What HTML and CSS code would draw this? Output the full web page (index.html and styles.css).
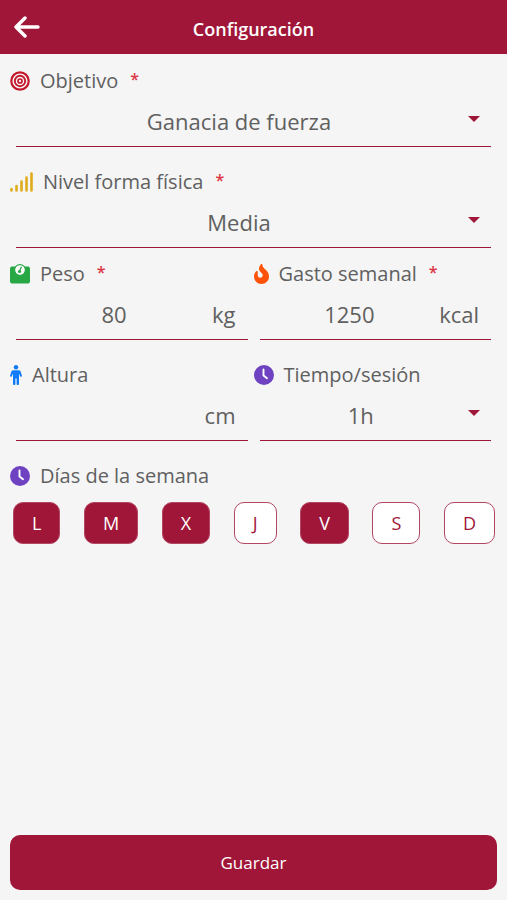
FILE: index.html
```html
<!DOCTYPE html>
<html lang="es">
<head>
<meta charset="utf-8">
<meta name="viewport" content="width=device-width, initial-scale=1">
<title>Configuración</title>
<link rel="stylesheet" href="styles.css">
</head>
<body>
<header class="topbar">
  <button class="back" type="button" aria-label="Volver">
    <svg width="26" height="22" viewBox="0 0 26 22" fill="none" stroke="#fff" stroke-width="3.4" stroke-linecap="round" stroke-linejoin="round"><path d="M11 2 2 11l9 9M2.500 11H24"/></svg>
  </button>
  <h1>Configuración</h1>
</header>
<form class="form">
  <div class="field wide">
    <label class="caption" for="goal">
      <svg width="20" height="20" viewBox="0 0 20 20" fill="none" stroke="#c4182c"><circle cx="10" cy="10" r="8.700" stroke-width="2.200"/><circle cx="10" cy="10" r="5.200" stroke-width="1.900"/><circle cx="10" cy="10" r="2" stroke-width="1.700"/></svg>
      Objetivo <span class="required">*</span>
    </label>
    <div class="control">
      <select id="goal" required><option>Ganacia de fuerza</option></select>
      <svg class="arrow" width="12" height="6" viewBox="0 0 12 6" fill="#a01638"><path d="M0 0h12L6 6z"/></svg>
    </div>
  </div>
  <div class="field wide short">
    <label class="caption" for="level">
      <svg width="23" height="20" viewBox="0 0 23 20" fill="none" stroke="#e0ac1c" stroke-width="2.600" stroke-linecap="round"><path d="M1.500 17v1.500M6.500 14v4.500M11.500 9.500v9M16.500 5.500v13M21.500 1.500v17"/></svg>
      Nivel forma física <span class="required">*</span>
    </label>
    <div class="control">
      <select id="level" required><option>Media</option></select>
      <svg class="arrow" width="12" height="6" viewBox="0 0 12 6" fill="#a01638"><path d="M0 0h12L6 6z"/></svg>
    </div>
  </div>
  <div class="field">
    <label class="caption" for="weight">
      <svg width="20" height="20" viewBox="0 0 20 20"><rect y="2.500" width="20" height="17" rx="2" fill="#28a745"/><circle cx="10" cy="6" r="5.400" fill="#fff" stroke="#28a745" stroke-width="1.200"/><circle cx="9.500" cy="7.500" r="1.600" fill="#28a745"/><path d="m9.700 7 1.500-3.800" stroke="#28a745" stroke-width="1.300" stroke-linecap="round"/></svg>
      Peso <span class="required">*</span>
    </label>
    <div class="control">
      <input id="weight" type="text" inputmode="numeric" value="80" required><span class="unit">kg</span>
    </div>
  </div>
  <div class="field">
    <label class="caption" for="burn">
      <svg width="15" height="20" viewBox="0 0 384 512" fill="#fd5208"><path d="M216 23.860c0-23.800-30.650-32.770-44.150-13.040C48 191.850 224 200 224 288c0 35.630-29.110 64.460-64.850 63.990-35.170-.45-63.150-29.770-63.150-64.940v-85.510c0-21.700-26.470-32.230-41.430-16.500C27.800 213.160 0 261.330 0 320c0 105.870 86.130 192 192 192s192-86.130 192-192c0-170.290-168-193-168-296.140z"/></svg>
      Gasto semanal <span class="required">*</span>
    </label>
    <div class="control">
      <input id="burn" type="text" inputmode="numeric" value="1250" required><span class="unit">kcal</span>
    </div>
  </div>
  <div class="field">
    <label class="caption" for="height">
      <svg width="12" height="20" viewBox="0 0 12 20" fill="#0d7bfa"><circle cx="6" cy="2.300" r="2.200"/><path d="M3.200 5.200h5.600c.8 0 1.300.4 1.700 1.100l1.400 4.200c.3 1.200-1.300 1.800-1.800.7L9 8.500V18.900c0 1.400-2.400 1.400-2.400 0V13.500H5.400v5.400c0 1.400-2.400 1.400-2.400 0V8.500l-1.100 2.700c-.5 1.100-2.100.5-1.800-.7l1.400-4.200c.4-.7.900-1.100 1.700-1.100z"/></svg>
      Altura
    </label>
    <div class="control">
      <input id="height" type="text" inputmode="numeric" value=""><span class="unit">cm</span>
    </div>
  </div>
  <div class="field">
    <label class="caption" for="session">
      <svg width="20" height="20" viewBox="0 0 20 20"><circle cx="10" cy="10" r="10" fill="#6f42c1"/><path d="M9.500 4.500v6l3.500 2.700" fill="none" stroke="#fff" stroke-width="1.900" stroke-linecap="round" stroke-linejoin="round"/></svg>
      Tiempo/sesión
    </label>
    <div class="control">
      <select id="session"><option>1h</option></select>
      <svg class="arrow" width="12" height="6" viewBox="0 0 12 6" fill="#a01638"><path d="M0 0h12L6 6z"/></svg>
    </div>
  </div>
  <div class="wide">
    <div class="caption" id="days-caption">
      <svg width="20" height="20" viewBox="0 0 20 20"><circle cx="10" cy="10" r="10" fill="#6f42c1"/><path d="M9.500 4.500v6l3.500 2.700" fill="none" stroke="#fff" stroke-width="1.900" stroke-linecap="round" stroke-linejoin="round"/></svg>
      Días de la semana
    </div>
    <div class="days" role="group" aria-labelledby="days-caption">
      <button type="button" aria-pressed="true">L</button>
      <button type="button" aria-pressed="true">M</button>
      <button type="button" aria-pressed="true">X</button>
      <button type="button" aria-pressed="false">J</button>
      <button type="button" aria-pressed="true">V</button>
      <button type="button" aria-pressed="false">S</button>
      <button type="button" aria-pressed="false">D</button>
    </div>
  </div>
  <button class="save wide" type="submit">Guardar</button>
</form>
</body>
</html>
```

FILE: styles.css
```css
* {
  box-sizing: border-box;
}

body {
  margin: 0;
  min-height: 100vh;
  display: flex;
  flex-direction: column;
  background: #f5f5f5;
  color: #606060;
  font-family: "Open Sans", "Noto Sans", sans-serif;
  font-size: 22px;
  font-weight: 500;
}

button,
input,
select {
  font: inherit;
  color: inherit;
  margin: 0;
}

.topbar {
  display: grid;
  grid-template-columns: 40px 1fr 40px;
  align-items: center;
  height: 54px;
  padding: 0 7px;
  background: #a01638;
  color: #fff;
}

.topbar h1 {
  margin: 0;
  padding-top: 4px;
  text-align: center;
  font-size: 18px;
  font-weight: 600;
  line-height: 24px;
}

.back {
  display: flex;
  justify-content: center;
  padding: 0;
  border: 0;
  background: none;
}

.form {
  flex: 1;
  display: grid;
  grid-template-columns: repeat(2, minmax(0, 1fr));
  grid-template-rows: repeat(5, auto) 1fr;
  padding: 10px;
}

.wide {
  grid-column: 1 / -1;
}

.field {
  margin-bottom: 18px;
}

.short {
  margin-bottom: 9px;
}

.caption {
  display: flex;
  align-items: center;
  gap: 10px;
  height: 33px;
  font-size: 20px;
}

.required {
  padding: 0 0 4px 2px;
  color: #dc3545;
  font-size: 16px;
  font-weight: 600;
}

.control {
  display: flex;
  align-items: center;
  height: 50px;
  margin: 0 6px;
  padding-bottom: 2px;
  border-bottom: 1px solid #a01638;
}

.control input,
.control select {
  flex: 1;
  width: 100%;
  min-width: 0;
  height: 46px;
  padding: 0;
  border: 0;
  outline: 0;
  background: none;
  text-align: center;
  text-align-last: center;
  appearance: none;
}

.unit {
  flex: none;
  margin-right: 12px;
}

.arrow {
  flex: none;
  margin: 0 11px 3px 6px;
}

.days {
  display: flex;
  justify-content: space-between;
  margin: 10px 2px 0 3px;
}

.days button {
  height: 42px;
  padding: 0 18px;
  border: 1px solid #b24663;
  border-radius: 10px;
  background: #fff;
  color: #a01638;
  font-size: 18px;
  font-weight: 400;
}

.days button[aria-pressed="true"] {
  background: #a01638;
  color: #fff;
}

.save {
  align-self: end;
  height: 55px;
  border: 0;
  border-radius: 10px;
  background: #a01638;
  color: #fff;
  font-size: 17px;
  font-weight: 400;
}
```
